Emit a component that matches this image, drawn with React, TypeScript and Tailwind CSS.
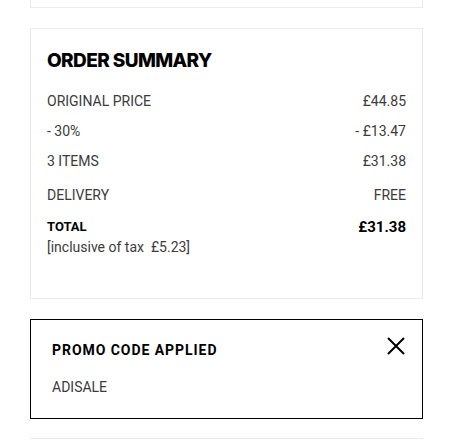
export default function App() {
  const rows = [
    { label: "ORIGINAL PRICE", value: "£44.85", h: "h-[30px]" },
    { label: "- 30%", value: "- £13.47", h: "h-[30px]" },
    { label: "3 ITEMS", value: "£31.38", h: "h-[30px]" },
  ];

  return (
    <div className="w-[466px] h-[448px] bg-white overflow-hidden font-['Roboto',sans-serif]">
      <div className="mx-[30px] w-[393px]">
        {/* previous card, cut off at the top */}
        <div className="h-[8px] border-x border-b border-[#ebebeb]" />

        <div className="mt-[20px] h-[271px] border border-[#ebebeb] px-[16px] pt-[20px]">
          <h2 className="text-[19px] leading-[24px] font-extrabold tracking-[-0.6px] text-black font-['Inter',sans-serif]">
            ORDER SUMMARY
          </h2>
          <div className="mt-[13px] text-[14px] text-[#3b3b3b]">
            {rows.map((r) => (
              <div key={r.label} className={`flex items-center justify-between ${r.h}`}>
                <span>{r.label}</span>
                <span>{r.value}</span>
              </div>
            ))}
            <div className="flex items-center justify-between h-[38px]">
              <span>DELIVERY</span>
              <span>FREE</span>
            </div>
            <div className="flex items-center justify-between mt-[3px] leading-[20px]">
              <span className="font-bold text-black text-[13px]">TOTAL</span>
              <span className="font-bold text-black text-[15px]">£31.38</span>
            </div>
            <div className="leading-[20px]">[inclusive of tax&nbsp; £5.23]</div>
          </div>
        </div>

        <div className="mt-[20px] h-[100px] border border-black px-[21px] pt-[20px] relative">
          <div className="text-[14px] font-bold text-black tracking-[0.95px]">PROMO CODE APPLIED</div>
          <div className="mt-[16px] text-[14px] text-[#3b3b3b]">ADISALE</div>
          <button className="absolute right-[16px] top-[16px] w-[20px] h-[20px] flex items-center justify-center">
            <svg width="18" height="18" viewBox="0 0 18 18" fill="none" stroke="black" strokeWidth="2">
              <path d="M1 1L17 17M17 1L1 17" />
            </svg>
          </button>
        </div>

        <div className="mt-[19px] border-t border-[#ebebeb]" />
      </div>
    </div>
  );
}
